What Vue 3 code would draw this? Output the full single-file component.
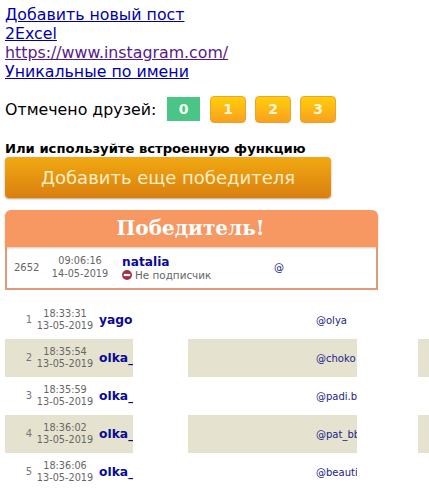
<script setup>
const links = [
  { text: 'Добавить новый пост', visited: false },
  { text: '2Excel', visited: false },
  { text: 'https://www.instagram.com/', visited: true },
  { text: 'Уникальные по имени', visited: false },
]
const counts = ['1', '2', '3']
const rows = [
  { n: 1, time: '18:33:31', name: 'yago', at: '@olya' },
  { n: 2, time: '18:35:54', name: 'olka_', at: '@choko' },
  { n: 3, time: '18:35:59', name: 'olka_', at: '@padi.b' },
  { n: 4, time: '18:36:02', name: 'olka_', at: '@pat_bb' },
  { n: 5, time: '18:36:06', name: 'olka_', at: '@beauti' },
]
</script>

<template>
  <div class="page">
    <div class="links">
      <a v-for="l in links" :key="l.text" href="#" class="link" :class="{ visited: l.visited }">{{ l.text }}</a>
    </div>
    <div class="marked">
      <span class="marked-label">Отмечено друзей:</span>
      <span class="zero">0</span>
      <span v-for="c in counts" :key="c" class="count">{{ c }}</span>
    </div>
    <div class="hint">Или используйте встроенную функцию</div>
    <button class="add">Добавить еще победителя</button>
    <div class="winner">
      <div class="winner-head">Победитель!</div>
      <div class="winner-body">
        <span class="w-num">2652</span>
        <span class="w-date">09:06:16<br>14-05-2019</span>
        <div class="w-user">
          <span class="w-name">natalia</span>
          <span class="w-status">
            <svg class="stop" width="10" height="10" viewBox="0 0 11 11"><circle cx="5.5" cy="5.5" r="5.5" fill="#a3324a"/><rect x="2" y="4.3" width="7" height="2.4" fill="#fff"/></svg>
            Не подписчик
          </span>
        </div>
        <span class="w-at">@</span>
      </div>
    </div>
    <div class="rows">
      <div v-for="r in rows" :key="r.n" class="row" :class="{ even: r.n % 2 === 0 }">
        <div class="cell c1">
          <span class="num">{{ r.n }}</span>
          <span class="date">{{ r.time }}<br>13-05-2019</span>
          <span class="name">{{ r.name }}</span>
        </div>
        <div class="cell c2"><span class="at">{{ r.at }}</span></div>
        <div class="cell c3"></div>
      </div>
    </div>
  </div>
</template>

<style>
html, body { margin: 0; background: #fff; }
</style>

<style scoped>
.page {
  width: 429px;
  height: 489px;
  overflow: hidden;
  box-sizing: border-box;
  padding: 5px 0 0 5px;
  font-family: "DejaVu Sans", sans-serif;
  font-size: 15.8px;
  color: #000;
}
.links { display: flex; flex-direction: column; align-items: flex-start; }
.link { color: #0000a8; line-height: 19px; text-decoration: underline; }
.link.visited { color: #551a8b; }
.marked { display: flex; align-items: center; margin-top: 14px; height: 28px; }
.marked-label { width: 162px; }
.zero {
  width: 33px; height: 24px; margin-right: 10px; background: #4ac585; color: #f2fff6;
  font-weight: bold; font-size: 14px; display: flex; align-items: center; justify-content: center;
}
.count {
  width: 36px; height: 27px; margin-right: 9px; border-radius: 4px; box-sizing: border-box;
  background: linear-gradient(#ffcf0a, #f9a01f); border: 1px solid #eda32a; color: #fff6d8;
  font-weight: bold; font-size: 14px; display: flex; align-items: center; justify-content: center;
}
.hint { font-weight: bold; font-size: 13.15px; line-height: 15px; margin-top: 18px; }
.add {
  display: block; width: 326px; height: 41px; margin-top: 1px; padding: 0; border: 0; border-radius: 4px;
  background: linear-gradient(#f1a912, #d97f10); color: #fdeec4;
  font-family: "DejaVu Sans", sans-serif; font-size: 18px; box-shadow: 0 1px 2px rgba(120, 70, 0, .5);
}
.winner { width: 373px; margin-top: 12px; }
.winner-head {
  height: 37px; line-height: 37px; background: #f79762; border-radius: 6px 6px 0 0; text-align: center;
  color: #fff; font-family: "DejaVu Serif", serif; font-weight: bold; font-size: 20px; padding-right: 2px; box-sizing: border-box;
  box-shadow: 0 1px 2px rgba(120, 70, 0, .3);
}
.winner-body {
  height: 43px; box-sizing: border-box; border: 2px solid #e09a78; border-top: 0; display: flex; align-items: center;
  font-size: 9.7px; color: #666;
}
.w-num { margin-left: 7px; width: 31px; font-size: 10px; }
.w-date { width: 70px; text-align: center; line-height: 12.5px; font-size: 9.7px; }
.w-user { width: 152px; margin-left: 7px; display: flex; flex-direction: column; }
.w-name { color: #0a0a96; font-weight: bold; font-size: 12.2px; line-height: 14px; }
.w-status { display: flex; align-items: center; gap: 3px; line-height: 12px; font-size: 10.4px; }
.w-at { color: #22228a; font-size: 10px; }
.rows { margin-top: 11px; }
.row { display: flex; height: 38px; width: 424px; overflow: hidden; }
.cell { height: 38px; flex: none; overflow: hidden; display: flex; align-items: center; white-space: nowrap; }
.c1 { width: 128px; }
.c2 { width: 169px; margin-left: 55px; padding-left: 128px; box-sizing: border-box; }
.c3 { width: 11px; margin-left: 61px; }
.even .cell { background: #e5e3cf; }
.num { width: 21px; margin-left: 6px; text-align: right; font-size: 10px; color: #777; margin-top: -1px; flex: none; }
.date { width: 62px; margin-left: 2px; font-size: 9.7px; line-height: 12.5px; color: #666; text-align: center; flex: none; }
.name { margin-left: 3px; color: #0a0a96; font-weight: bold; font-size: 12.3px; }
.at { color: #22228a; font-size: 10px; }
</style>
